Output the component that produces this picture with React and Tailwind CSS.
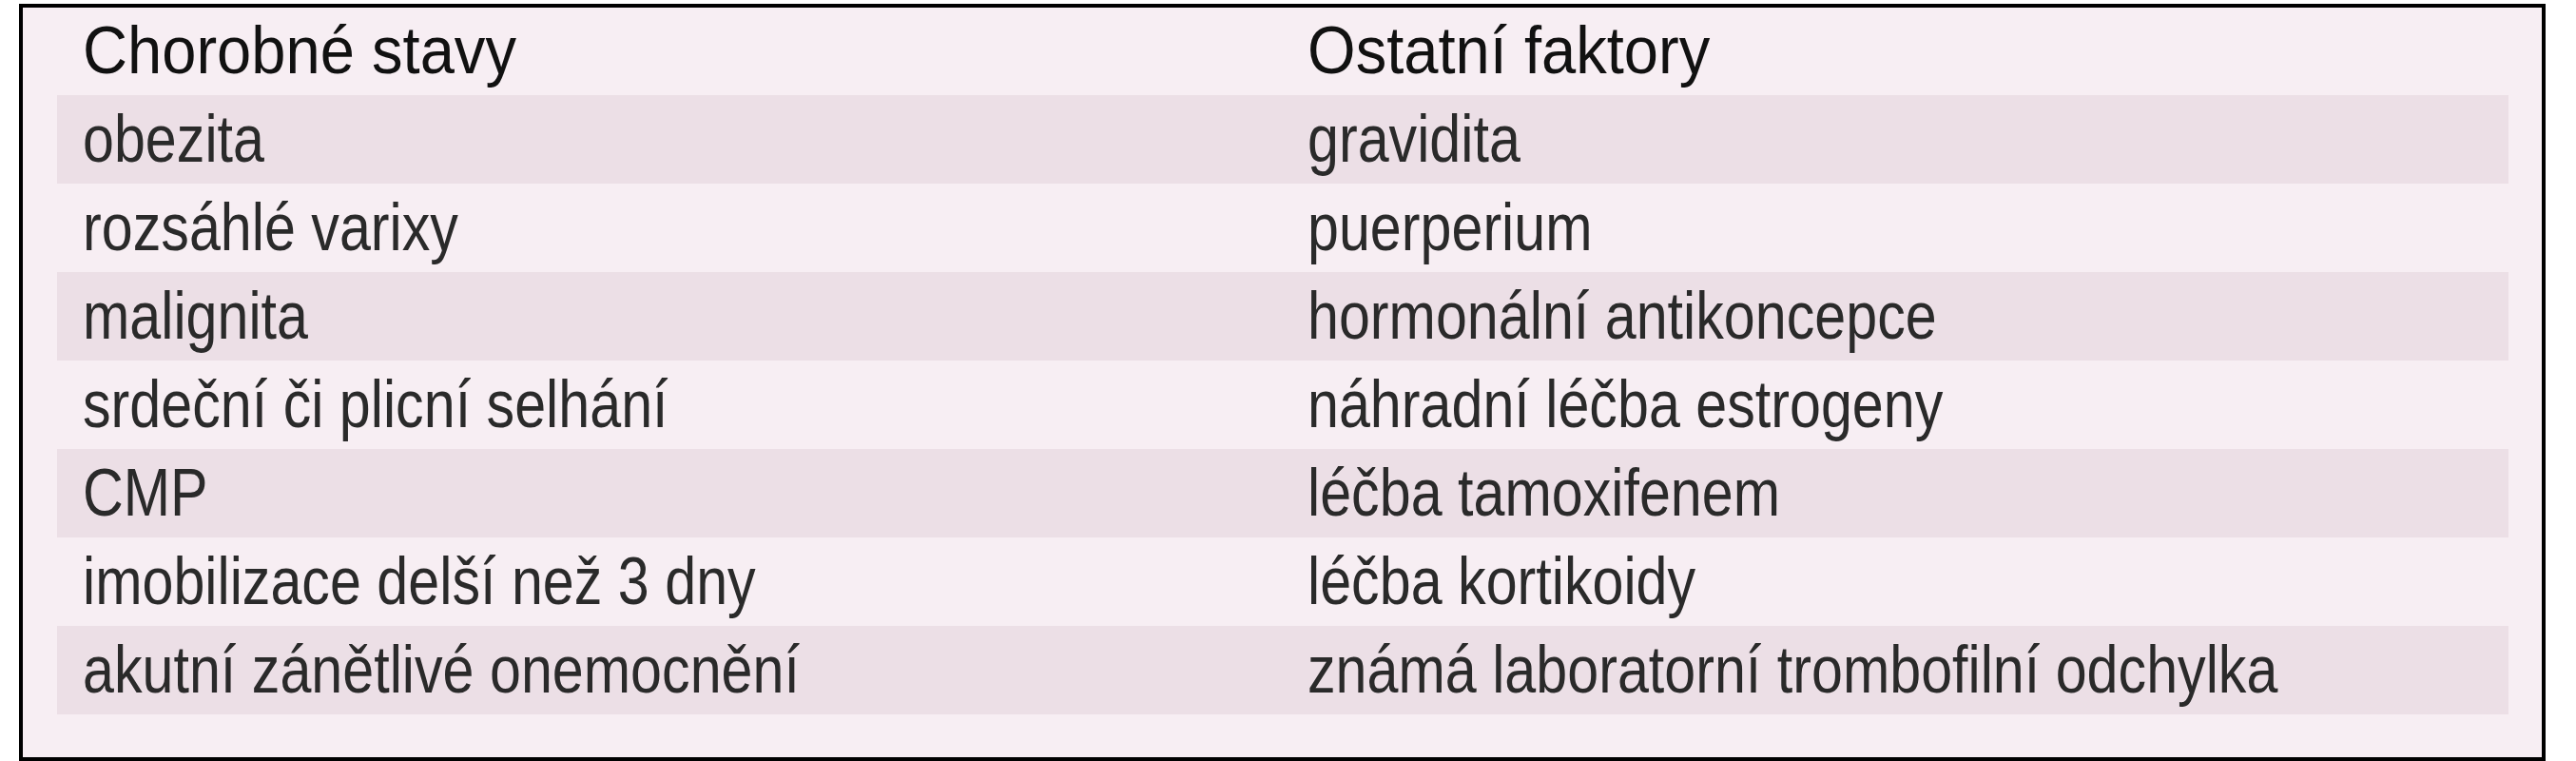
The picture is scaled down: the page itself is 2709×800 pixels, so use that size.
import React from "react";

const rows = [
  ["obezita", "gravidita"],
  ["rozsáhlé varixy", "puerperium"],
  ["malignita", "hormonální antikoncepce"],
  ["srdeční či plicní selhání", "náhradní léčba estrogeny"],
  ["CMP", "léčba tamoxifenem"],
  ["imobilizace delší než 3 dny", "léčba kortikoidy"],
  ["akutní zánětlivé onemocnění", "známá laboratorní trombofilní odchylka"],
];

export default function App() {
  return (
    <div className="bg-white pt-[4px] pl-[20px] pr-[32px] w-[2709px]">
      <div className="border-4 border-black bg-[#f7eef3] pl-[36px] pr-[35px] pb-[45px]">
        <div className="flex h-[92px] pl-[27px] pt-[10px] text-[70px] leading-none text-[#111] font-['Liberation_Sans',Arial,sans-serif]">
          <div className="w-[1288px] shrink-0 whitespace-nowrap">
            <span className="inline-block origin-left scale-x-[0.93]">Chorobné stavy</span>
          </div>
          <div className="flex-1 min-w-0 whitespace-nowrap">
            <span className="inline-block origin-left scale-x-[0.93]">Ostatní faktory</span>
          </div>
        </div>
        {rows.map(([a, b], i) => (
          <div
            key={i}
            className={
              "flex h-[93px] pl-[27px] pt-[11px] text-[70px] leading-none text-[#2a2a2a] font-['Liberation_Sans',Arial,sans-serif] " +
              (i % 2 === 0 ? "bg-[#ecdfe6]" : "")
            }
          >
            <div className="w-[1288px] shrink-0 whitespace-nowrap">
              <span className="inline-block origin-left scale-x-[0.846]">{a}</span>
            </div>
            <div className="flex-1 min-w-0 whitespace-nowrap">
              <span className="inline-block origin-left scale-x-[0.846]">{b}</span>
            </div>
          </div>
        ))}
      </div>
    </div>
  );
}
